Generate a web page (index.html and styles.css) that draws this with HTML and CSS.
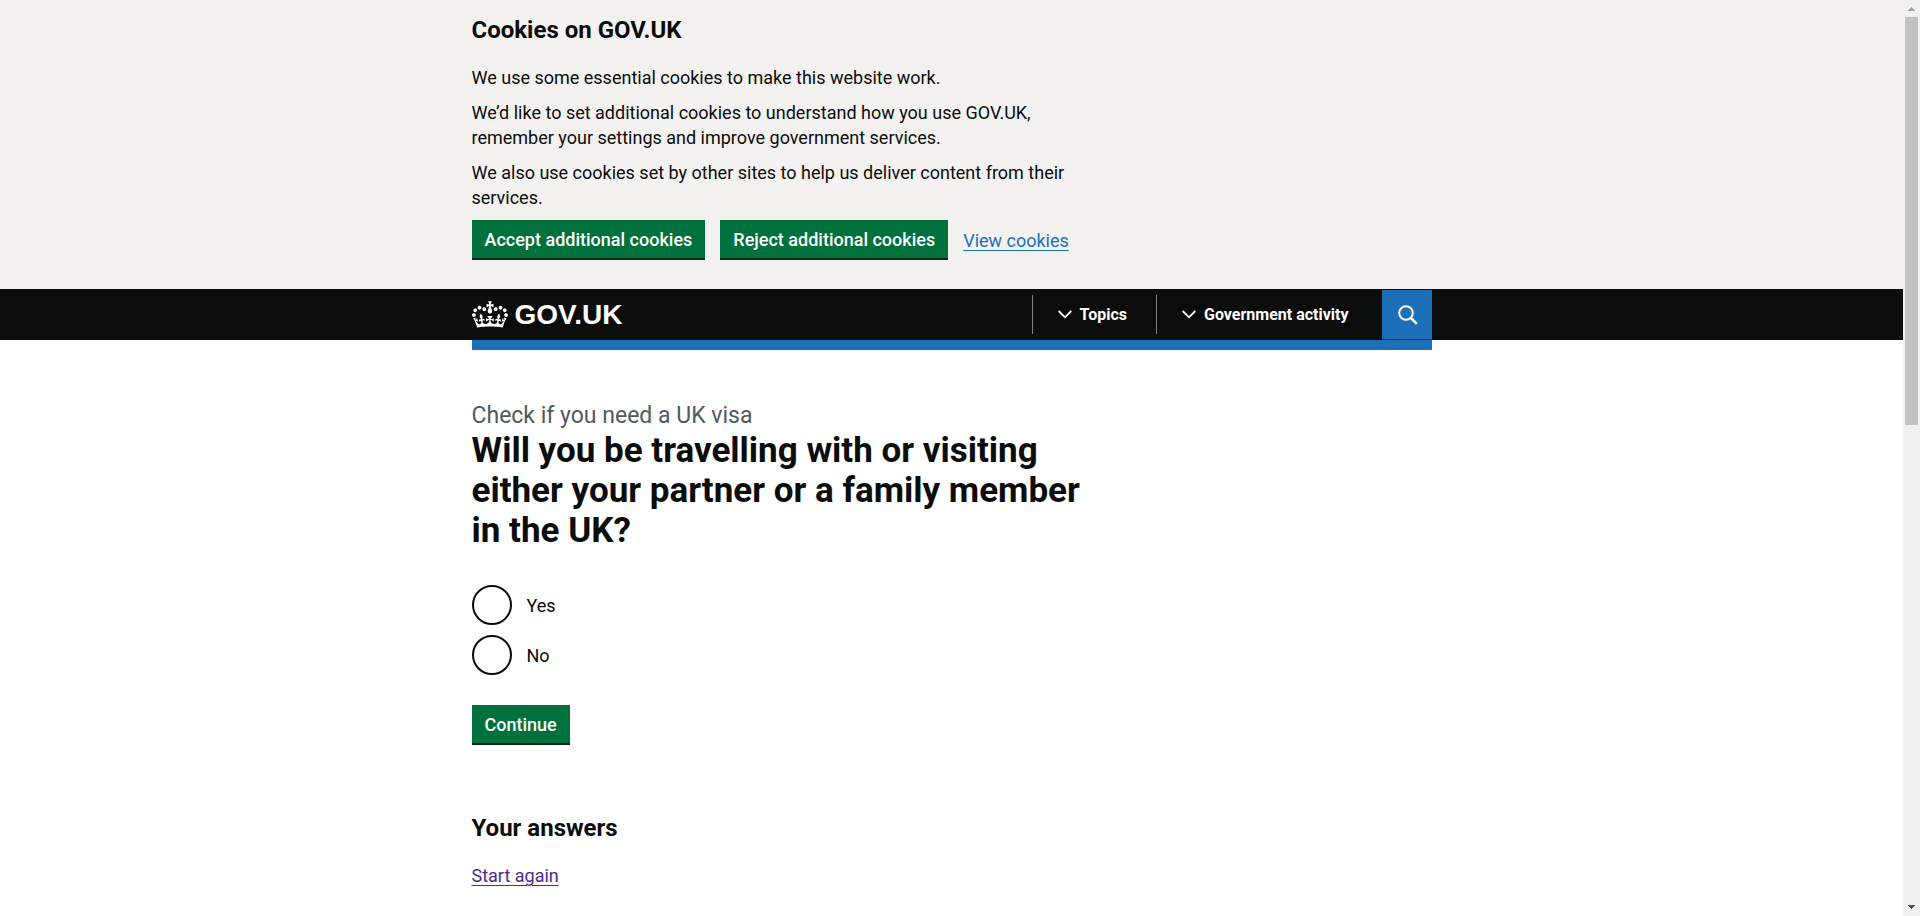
FILE: index.html
```html
<!DOCTYPE html>
<html lang="en">
<head>
<meta charset="utf-8">
<meta name="viewport" content="width=device-width, initial-scale=1">
<title>Will you be travelling with or visiting either your partner or a family member in the UK? - Check if you need a UK visa - GOV.UK</title>
<link rel="stylesheet" href="styles.css">
</head>
<body>
<div class="window">
  <div class="page">
    <section class="cookie-banner" aria-label="Cookies on GOV.UK">
      <div class="container">
        <div class="two-thirds">
          <h2 class="heading-m">Cookies on GOV.UK</h2>
          <p class="body-text">We use some essential cookies to make this website work.</p>
          <p class="body-text">We’d like to set additional cookies to understand how you use GOV.UK, remember your settings and improve government services.</p>
          <p class="body-text">We also use cookies set by other sites to help us deliver content from their services.</p>
          <div class="button-group">
            <button class="button" type="button">Accept additional cookies</button>
            <button class="button" type="button">Reject additional cookies</button>
            <a class="link" href="#cookies">View cookies</a>
          </div>
        </div>
      </div>
    </section>

    <header class="header">
      <div class="container header-row">
        <a class="logo" href="#home">
          <svg class="crown" viewBox="0 0 132 97" aria-hidden="true"><path fill="currentColor" fill-rule="evenodd" d="M25 30.2c3.5 1.5 7.7-.2 9.1-3.7 1.5-3.6-.2-7.8-3.9-9.2-3.6-1.4-7.6.3-9.1 3.9-1.4 3.5.3 7.5 3.9 9zM9 39.5c3.6 1.5 7.8-.2 9.2-3.7 1.5-3.6-.2-7.8-3.9-9.1-3.6-1.5-7.6.2-9.1 3.8-1.4 3.5.3 7.5 3.8 9zM4.4 57.2c3.5 1.5 7.7-.2 9.1-3.8 1.5-3.6-.2-7.7-3.9-9.1-3.5-1.5-7.6.3-9.1 3.8-1.4 3.5.3 7.6 3.9 9.1zm38.3-21.4c3.5 1.5 7.7-.2 9.1-3.8 1.5-3.6-.2-7.7-3.9-9.1-3.6-1.5-7.6.3-9.1 3.8-1.3 3.6.4 7.7 3.9 9.1zm64.4-5.6c-3.6 1.5-7.8-.2-9.1-3.7-1.5-3.6.2-7.8 3.8-9.2 3.6-1.4 7.7.3 9.2 3.9 1.3 3.5-.4 7.5-3.9 9zm15.9 9.3c-3.6 1.5-7.7-.2-9.1-3.7-1.5-3.6.2-7.8 3.7-9.1 3.6-1.5 7.7.2 9.2 3.8 1.5 3.5-.3 7.5-3.8 9zm4.7 17.7c-3.6 1.5-7.8-.2-9.2-3.8-1.5-3.6.2-7.7 3.9-9.1 3.6-1.5 7.7.3 9.2 3.8 1.3 3.5-.4 7.6-3.9 9.1zM89.3 35.8c-3.6 1.5-7.8-.2-9.2-3.8-1.4-3.6.2-7.7 3.9-9.1 3.6-1.5 7.7.3 9.2 3.8 1.4 3.6-.3 7.7-3.9 9.1zM69.7 17.7l8.9 4.7V9.3l-8.9 2.8c-.2-.3-.5-.6-.9-.9L72.4 0H59.6l3.5 11.2c-.3.3-.6.5-.9.9l-8.8-2.8v13.1l8.8-4.7c.3.3.6.7.9.9l-5 15.4v.1c-.2.8-.4 1.6-.4 2.4 0 4.1 3.1 7.5 7 8.1h.2c.3 0 .7.1 1 .1.4 0 .7 0 1-.1h.2c4-.6 7.1-4.1 7.1-8.1 0-.8-.1-1.7-.4-2.4V34l-5.1-15.4c.4-.2.7-.6 1-.9zM66 92.8c16.9 0 32.8 1.1 47.1 3.2 4-16.9 8.9-26.7 14-33.5l-9.6-3.4c1 4.9 1.1 7.2 0 10.2-1.5-1.4-3-4.3-4.2-8.7L108.6 76c2.8-2 5-3.2 7.5-3.3-4.4 9.4-10 11.9-13.6 11.2-4.3-.8-6.3-4.6-5.6-7.9 1-4.7 5.7-5.9 8-.5 4.3-8.7-3-11.4-7.6-8.8 7.1-7.2 7.9-13.5 2.1-21.1-8 6.1-8.1 12.3-4.5 20.8-4.7-5.4-12.1-2.5-9.5 6.2 3.4-5.2 7.9-2 7.2 3.1-.6 4.3-6.4 7.8-13.5 7.2-10.3-.9-10.9-8-11.2-13.8 2.5-.5 7.1 1.8 11 7.3L80.2 60c-4.1 4.4-8 5.3-12.3 5.4 1.4-4.4 8-11.6 8-11.6H55.5s6.4 7.2 7.9 11.6c-4.2-.1-8-1-12.3-5.4l1.4 16.4c3.9-5.5 8.5-7.7 10.9-7.3-.3 5.8-.9 12.8-11.1 13.8-7.2.6-12.9-2.9-13.5-7.2-.7-5 3.8-8.3 7.1-3.1 2.7-8.7-4.6-11.6-9.4-6.2 3.7-8.5 3.6-14.7-4.6-20.8-5.8 7.6-5 13.9 2.2 21.1-4.7-2.6-11.9.1-7.7 8.8 2.3-5.5 7.1-4.2 8.1.5.7 3.3-1.3 7.1-5.7 7.9-3.5.7-9-1.8-13.5-11.2 2.5.1 4.7 1.3 7.5 3.3l-4.7-15.4c-1.2 4.4-2.7 7.2-4.3 8.7-1.1-3-.9-5.3 0-10.2l-9.5 3.4c5 6.9 9.9 16.7 14 33.5 14.8-2.1 30.8-3.2 47.7-3.2z"/></svg>
          <span>GOV.UK</span>
        </a>
        <nav class="nav" aria-label="Menu">
          <button class="nav-button" type="button">
            <svg class="chevron" viewBox="0 0 14 9" aria-hidden="true"><path d="M.7 1l6.3 6.300L13.300 1" fill="none" stroke="currentColor" stroke-width="1.800"/></svg>
            Topics
          </button>
          <button class="nav-button nav-button-last" type="button">
            <svg class="chevron" viewBox="0 0 14 9" aria-hidden="true"><path d="M.7 1l6.3 6.300L13.300 1" fill="none" stroke="currentColor" stroke-width="1.800"/></svg>
            Government activity
          </button>
          <button class="search-button" type="button" aria-label="Search GOV.UK">
            <svg class="search-icon" viewBox="0 0 20 20" aria-hidden="true"><circle cx="8" cy="8" r="6.800" fill="none" stroke="currentColor" stroke-width="2"/><path d="M12.800 12.800l6 6" stroke="currentColor" stroke-width="2.500"/></svg>
          </button>
        </nav>
      </div>
    </header>
    <div class="container"><div class="blue-bar"></div></div>

    <main class="container main">
      <form class="two-thirds question">
        <fieldset class="fieldset">
          <legend class="legend">
            <span class="caption">Check if you need a UK visa</span>
            <h1 class="heading-xl">Will you be travelling with or visiting either your partner or a family member in the UK?</h1>
          </legend>
          <div class="radios">
            <div class="radio-item">
              <input class="radio" type="radio" name="response" id="response-yes" value="yes">
              <label class="radio-label" for="response-yes">Yes</label>
            </div>
            <div class="radio-item">
              <input class="radio" type="radio" name="response" id="response-no" value="no">
              <label class="radio-label" for="response-no">No</label>
            </div>
          </div>
        </fieldset>
        <button class="button" type="button">Continue</button>
      </form>
      <section class="answers">
        <h2 class="heading-m">Your answers</h2>
        <p class="body-text"><a class="link link-visited" href="#start">Start again</a></p>
      </section>
    </main>
  </div>

  <div class="scrollbar" aria-hidden="true">
    <svg class="scroll-arrow scroll-arrow-up" viewBox="0 0 7 4" shape-rendering="crispEdges"><path d="M3 0h1v1h1v1h1v1h1v1H0V3h1V2h1V1h1z" fill="currentColor"/></svg>
    <div class="scroll-thumb"></div>
    <svg class="scroll-arrow" viewBox="0 0 7 4" shape-rendering="crispEdges"><path d="M0 0h7v1H6v1H5v1H4v1H3V3H2V2H1V1H0z" fill="currentColor"/></svg>
  </div>
</div>
</body>
</html>
```
FILE: styles.css
```css
* {
  box-sizing: border-box;
}

body {
  margin: 0;
  background: #fff;
  color: #0b0c0c;
  font-family: Roboto, "Liberation Sans", sans-serif;
  font-size: 18px;
  line-height: 25px;
}

.window {
  display: flex;
}

.page {
  flex: 1;
  min-width: 0;
}

.container {
  max-width: 960px;
  margin: 0 auto;
}

.two-thirds {
  max-width: 630px;
}

.cookie-banner {
  padding: 15px 0 29px;
  background: #f3f2f1;
}

.heading-m {
  margin: 0 0 20px;
  font-size: 24px;
  line-height: 30px;
  font-weight: 700;
}

.body-text {
  margin: 0 0 10px;
}

.button-group {
  display: flex;
  flex-wrap: wrap;
  align-items: center;
  gap: 15px;
}

.button {
  height: 40px;
  padding: 0 13px;
  border: 0;
  border-bottom: 2px solid #002d18;
  background: #00703c;
  color: #fff;
  font: inherit;
  font-weight: 500;
  cursor: pointer;
}

.link {
  color: #1d70b8;
  text-decoration: underline;
  text-decoration-thickness: 1px;
  text-underline-offset: 3px;
}

.link-visited {
  color: #4c2c92;
}

.header {
  background: #0b0c0c;
  color: #fff;
}

.header-row {
  display: flex;
  justify-content: space-between;
  align-items: center;
  height: 51px;
}

.logo {
  display: flex;
  align-items: center;
  gap: 7px;
  color: #fff;
  font-family: "Liberation Sans", Arial, sans-serif;
  font-size: 28px;
  line-height: 30px;
  font-weight: 700;
  text-decoration: none;
}

.crown {
  width: 36px;
  height: 27px;
}

.nav {
  display: flex;
  align-items: center;
}

.nav-button {
  display: flex;
  align-items: center;
  gap: 8px;
  height: 39px;
  padding: 0 29px 0 25px;
  border: 0;
  border-left: 1px solid #7c8285;
  background: none;
  color: #fff;
  font: inherit;
  font-size: 16px;
  font-weight: 700;
  cursor: pointer;
}

.nav-button-last {
  padding-right: 33px;
}

.chevron {
  width: 14px;
  height: 9px;
}

.search-button {
  display: flex;
  align-items: center;
  justify-content: center;
  width: 50px;
  height: 50px;
  padding: 2px 0 0 2px;
  border: 0;
  border-bottom: 1px solid #003078;
  background: #1d70b8;
  color: #fff;
  cursor: pointer;
}

.search-icon {
  width: 20px;
  height: 20px;
}

.blue-bar {
  height: 10px;
  background: #1d70b8;
}

.main {
  padding: 51px 0 28px;
}

.fieldset {
  margin: 0 0 30px;
  padding: 0;
  border: 0;
}

.legend {
  margin-bottom: 34px;
  padding: 0;
}

.caption {
  display: block;
  color: #505a5f;
  font-size: 23px;
  line-height: 30px;
}

.heading-xl {
  margin: 0;
  font-size: 35px;
  line-height: 40px;
  font-weight: 700;
}

.radios {
  display: flex;
  flex-direction: column;
  gap: 10px;
}

.radio-item {
  display: flex;
  align-items: center;
  gap: 15px;
}

.radio {
  appearance: none;
  width: 40px;
  height: 40px;
  margin: 0;
  border: 2px solid #0b0c0c;
  border-radius: 50%;
  background: #fff;
}

.radio:checked {
  background: radial-gradient(#0b0c0c 10px, #fff 11px);
}

.answers {
  margin-top: 68px;
}

.scrollbar {
  position: sticky;
  top: 0;
  display: flex;
  flex-direction: column;
  align-items: center;
  width: 17px;
  height: 100vh;
  padding: 7px 0;
  background: #f1f1f1;
  color: #505050;
}

.scroll-arrow {
  width: 7px;
  height: 4px;
}

.scroll-arrow-up {
  margin-bottom: 6px;
  color: #a3a3a3;
}

.scroll-thumb {
  width: 13px;
  height: 44.5vh;
  margin-bottom: auto;
  background: #c1c1c1;
}
```
